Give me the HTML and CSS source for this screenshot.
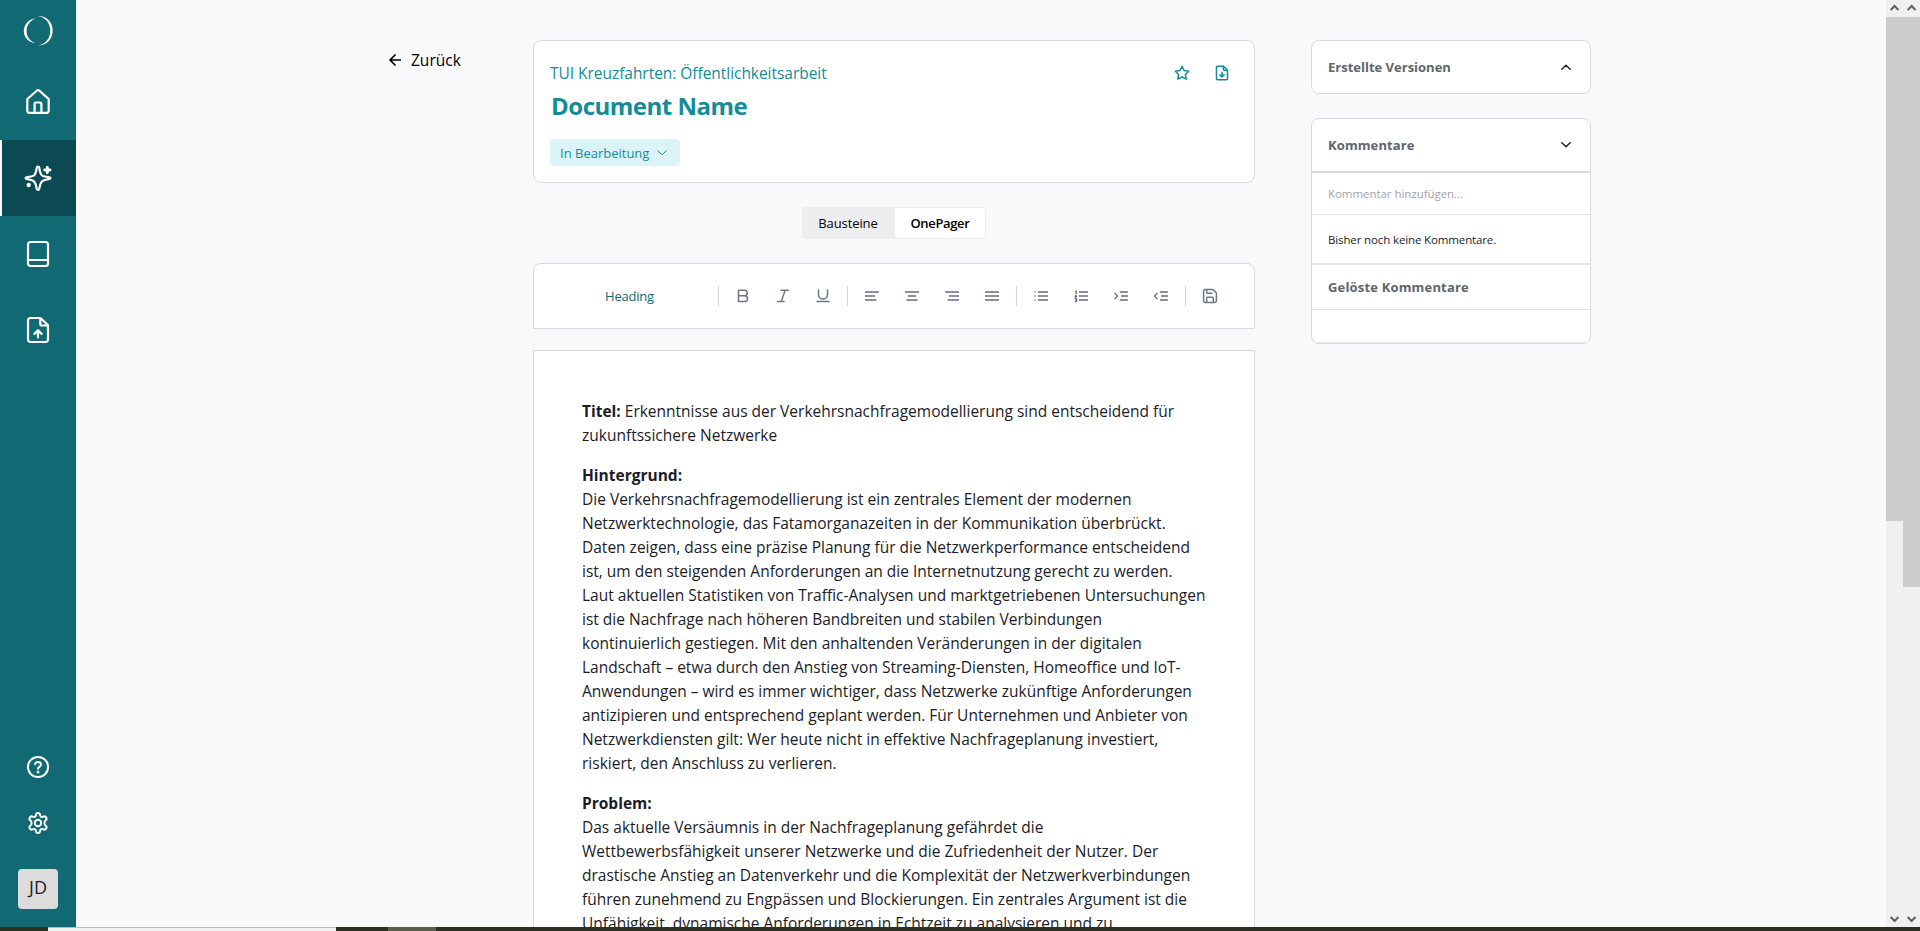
FILE: index.html
```
<!DOCTYPE html>
<html lang="de">
<head>
<meta charset="utf-8">
<title>Document Name</title>
<link rel="stylesheet" href="styles.css">
</head>
<body>
<div class="app">
  <nav class="sidebar">
    <a class="logo"><svg width="32" height="32" viewBox="0 0 32 32" fill="#fff"><path d="M14.200 3.200C7 3.600 1.800 9.500 1.800 16.200c0 6.600 5.200 11.600 12.200 11.900C8.400 26.500 4.600 22 4.600 16.200 4.600 9.800 8.600 4.900 14.200 3.200z"/><path d="M15.300 1.100c8.600-.6 15.400 5.500 15.400 14.400 0 8.700-6.300 15.100-14.400 14.900 7-1 12-7 12-14.600C28.300 8 23 1.800 15.300 1.100z"/></svg></a>
    <a class="nav-item"><svg width="28" height="28" viewBox="0 0 28 28"><path d="M3.300 11 12.700 2.700a2 2 0 0 1 2.600 0L24.700 11V23a1.800 1.800 0 0 1-1.800 1.800H5.100A1.800 1.800 0 0 1 3.300 23z"/><path d="M10.600 24.500V15.800a1.300 1.300 0 0 1 1.300-1.300h4.200a1.300 1.300 0 0 1 1.300 1.300v8.700"/></svg></a>
    <a class="nav-item active"><svg width="28" height="28" viewBox="0 0 28 28"><path d="M14 2.500c-1 0-1.200.8-1.300 1.500-.7 5-1.500 6.700-3 7.600C8 12.500 6.300 12.700 3.500 13c-1.300.2-2 .4-2 1s.7.900 2 1.100c3 .5 4.800.9 6.200 2 1.500 1.200 2.200 2.900 3 7.400.2.900.4 1.500 1.300 1.500s1.100-.6 1.300-1.500c.8-4.500 1.500-6.200 3-7.400 1.400-1.100 3.200-1.500 6.200-2 1.300-.2 2-.5 2-1.100s-.7-.8-2-1c-2.800-.3-4.500-.5-6.200-1.400-1.500-.9-2.300-2.600-3-7.600-.1-.7-.3-1.500-1.300-1.500z"/><path d="M23.300 3.300v5.400M20.600 6H26" stroke-width="2.800"/><circle cx="4.700" cy="21" r="2.200" class="solid"/></svg></a>
    <a class="nav-item"><svg width="28" height="28" viewBox="0 0 28 28"><rect x="4" y="2" width="20" height="24" rx="2.500"/><path d="M4 20h20"/></svg></a>
    <a class="nav-item"><svg width="28" height="28" viewBox="0 0 28 28"><path d="M16.500 2H6.500A2.500 2.500 0 0 0 4 4.500v19A2.500 2.500 0 0 0 6.500 26h15a2.500 2.500 0 0 0 2.500-2.500V9.300z"/><path d="M16.300 2.500V8a1.500 1.500 0 0 0 1.500 1.500h5.700M14 21.500v-7m-3.600 3.400L14 14.300l3.600 3.600"/></svg></a>
    <div class="nav-bottom">
      <a class="small-item"><svg width="24" height="24" viewBox="0 0 24 24"><circle cx="12" cy="12" r="10.100"/><path d="M9.100 9.300c.3-1.500 1.500-2.300 2.900-2.300 1.700 0 3 1.100 3 2.600 0 2.200-3 2.300-3 4.200" /><circle cx="12" cy="17" r=".5"/></svg></a>
      <a class="small-item"><svg width="24" height="24" viewBox="0 0 24 24"><path d="M12 2c-1.500 0-2 .9-2.100 2-.1 1.700-1.600 2.500-3.100 1.700-1-.5-2.200-.6-3 .8s-.2 2.400.7 3c1.400 1 1.400 4 0 5-.9.600-1.500 1.600-.7 3s2 1.300 3 .8c1.500-.8 3 0 3.100 1.700.1 1.100.6 2 2.100 2s2-.9 2.100-2c.1-1.700 1.600-2.500 3.100-1.700 1 .5 2.200.6 3-.8s.2-2.400-.7-3c-1.400-1-1.400-4 0-5 .9-.6 1.500-1.600.7-3s-2-1.300-3-.8c-1.500.8-3 0-3.100-1.700C14 2.900 13.500 2 12 2z"/><circle cx="12" cy="12" r="3.200"/></svg></a>
      <div class="avatar">JD</div>
    </div>
  </nav>

  <main class="content">
    <a class="back"><svg width="12" height="12" viewBox="0 0 12 12"><path d="M11.500 6H1M6 1 1 6l5 5"/></svg><span>Zurück</span></a>

    <div class="center">
      <section class="doc-card">
        <div class="doc-top">
          <span class="project">TUI Kreuzfahrten: Öffentlichkeitsarbeit</span>
          <span class="doc-actions">
            <svg width="16" height="16" viewBox="0 0 16 16"><path d="m8 1.300 2.100 4.200 4.600.7-3.300 3.300.8 4.700L8 12l-4.200 2.200.8-4.700L1.300 6.200l4.600-.7z"/></svg>
            <svg width="16" height="16" viewBox="0 0 16 16"><path d="M9.500 1.200h-6a1 1 0 0 0-1 1v11.600a1 1 0 0 0 1 1h9a1 1 0 0 0 1-1V5.200z"/><path d="M9.300 1.300v3a1 1 0 0 0 1 1h3.100M8 7.300v4.500M5.900 9.800 8 11.900l2.100-2.100"/></svg>
          </span>
        </div>
        <h1>Document Name</h1>
        <span class="status"><span>In Bearbeitung</span><svg width="10" height="6" viewBox="0 0 10 6"><path d="m.7.800 4.300 4 4.300-4"/></svg></span>
      </section>

      <div class="toggle"><span class="tab">Bausteine</span><span class="tab selected">OnePager</span></div>

      <div class="toolbar">
        <span class="style-name">Heading</span>
        <i class="sep"></i>
        <div class="tools">
          <svg width="16" height="16" viewBox="0 0 16 16"><path d="M3.500 2.300h6a2.700 2.700 0 0 1 0 5.500h-6zM3.500 7.800h6.600a2.900 2.900 0 0 1 0 5.700H3.500z"/></svg>
          <svg width="16" height="16" viewBox="0 0 16 16"><path d="M6 2.300h7.500M2.500 13.500H9M10.200 2.300l-4 11.200"/></svg>
          <svg width="16" height="16" viewBox="0 0 16 16"><path d="M3.500 2v4.500a4.500 4.500 0 0 0 9 0V2M2 13.600h12"/></svg>
        </div>
        <i class="sep"></i>
        <div class="tools bars">
          <svg width="16" height="16" viewBox="0 0 16 16"><path d="M1 4h14M1 8h10M1 12h11.500"/></svg>
          <svg width="16" height="16" viewBox="0 0 16 16"><path d="M1 4h14M4 8h8M2.500 12h11"/></svg>
          <svg width="16" height="16" viewBox="0 0 16 16"><path d="M1 4h14M5 8h10M3.500 12H15"/></svg>
          <svg width="16" height="16" viewBox="0 0 16 16"><path d="M1 4h14M1 8h14M1 12h14"/></svg>
        </div>
        <i class="sep"></i>
        <div class="tools bars">
          <svg width="16" height="16" viewBox="0 0 16 16"><path d="M5 4h10M5 8h10M5 12h10"/><path class="dots" d="M1 4h2M1 8h2M1 12h2"/></svg>
          <svg width="16" height="16" viewBox="0 0 16 16"><path d="M6 4h9M6 8h9M6 12h9"/><path class="fine" d="M2 3.500l1.200-.4v3M1.800 8h1.800L2 10M1.800 11h1.800v2.500H1.800"/></svg>
          <svg width="16" height="16" viewBox="0 0 16 16"><path d="M7 4h8M8 8h7M7 12h8"/><path class="fine" d="m1.500 5 3 3-3 3"/></svg>
          <svg width="16" height="16" viewBox="0 0 16 16"><path d="M7 4h8M8 8h7M7 12h8"/><path class="fine" d="m4.500 5-3 3 3 3"/></svg>
        </div>
        <i class="sep"></i>
        <div class="tools">
          <svg width="16" height="16" viewBox="0 0 16 16"><path d="M3 1.600h8L14.400 5v8a1.400 1.400 0 0 1-1.400 1.400H3A1.400 1.400 0 0 1 1.600 13V3A1.400 1.400 0 0 1 3 1.600z"/><path d="M4.700 14.200V10a.8.800 0 0 1 .8-.8h5a.8.800 0 0 1 .8.800v4.200M4.700 1.800V4.500a.8.800 0 0 0 .8.800H10"/></svg>
        </div>
      </div>

      <article class="page">
        <p><b>Titel:</b> Erkenntnisse aus der Verkehrsnachfragemodellierung sind entscheidend für<br>zukunftssichere Netzwerke</p>
        <p><b>Hintergrund:</b><br>Die Verkehrsnachfragemodellierung ist ein zentrales Element der modernen<br>Netzwerktechnologie, das Fatamorganazeiten in der Kommunikation überbrückt.<br>Daten zeigen, dass eine präzise Planung für die Netzwerkperformance entscheidend<br>ist, um den steigenden Anforderungen an die Internetnutzung gerecht zu werden.<br>Laut aktuellen Statistiken von Traffic-Analysen und marktgetriebenen Untersuchungen<br>ist die Nachfrage nach höheren Bandbreiten und stabilen Verbindungen<br>kontinuierlich gestiegen. Mit den anhaltenden Veränderungen in der digitalen<br>Landschaft – etwa durch den Anstieg von Streaming-Diensten, Homeoffice und IoT-<br>Anwendungen – wird es immer wichtiger, dass Netzwerke zukünftige Anforderungen<br>antizipieren und entsprechend geplant werden. Für Unternehmen und Anbieter von<br>Netzwerkdiensten gilt: Wer heute nicht in effektive Nachfrageplanung investiert,<br>riskiert, den Anschluss zu verlieren.</p>
        <p><b>Problem:</b><br>Das aktuelle Versäumnis in der Nachfrageplanung gefährdet die<br>Wettbewerbsfähigkeit unserer Netzwerke und die Zufriedenheit der Nutzer. Der<br>drastische Anstieg an Datenverkehr und die Komplexität der Netzwerkverbindungen<br>führen zunehmend zu Engpässen und Blockierungen. Ein zentrales Argument ist die<br>Unfähigkeit, dynamische Anforderungen in Echtzeit zu analysieren und zu</p>
      </article>
    </div>

    <aside class="panels">
      <section class="panel versions"><h2>Erstellte Versionen<svg width="12" height="8" viewBox="0 0 12 8"><path d="M1.800 6.200 6 2.200l4.200 4"/></svg></h2></section>
      <section class="panel comments">
        <h2>Kommentare<svg width="12" height="8" viewBox="0 0 12 8"><path d="M1.800 1.800 6 5.800l4.200-4"/></svg></h2>
        <div class="comment-input">Kommentar hinzufügen...</div>
        <div class="comment-empty">Bisher noch keine Kommentare.</div>
        <h3>Gelöste Kommentare</h3>
        <div class="resolved"></div>
      </section>
    </aside>
  </main>

  <div class="scrollbar inner"><svg width="17" height="17" viewBox="0 0 17 17"><path d="m4.700 10 3.900-4 3.900 4"/></svg><i class="thumb"></i><svg class="down" width="17" height="17" viewBox="0 0 17 17"><path d="m4.700 7 3.900 4 3.900-4"/></svg></div>
  <div class="scrollbar outer"><svg width="17" height="17" viewBox="0 0 17 17"><path d="m4.700 10 3.900-4 3.900 4"/></svg><i class="thumb"></i><svg class="down" width="17" height="17" viewBox="0 0 17 17"><path d="m4.700 7 3.900 4 3.900-4"/></svg></div>
</div>
<footer class="taskbar"><i class="search"></i><i class="task"></i></footer>
</body>
</html>
```
FILE: styles.css
```
* { box-sizing: border-box; }
body {
  margin: 0;
  height: 931px;
  overflow: hidden;
  background: #f9f9fb;
  font-family: "Open Sans", "Noto Sans", sans-serif;
  font-size: 15.500px;
  color: #1c1c27;
}
svg { display: block; flex: none; fill: none; stroke: currentColor; stroke-linecap: round; stroke-linejoin: round; }
.app { display: flex; height: 927px; overflow: hidden; }

.sidebar { width: 76px; flex: none; display: flex; flex-direction: column; background: #116a73; color: #fff; }
.logo { height: 64px; display: flex; justify-content: center; padding-top: 15px; }
.logo svg { stroke: none; fill: #fff; }
.nav-item { height: 76px; display: flex; align-items: center; justify-content: center; }
.nav-item svg { stroke-width: 2.200; }
.nav-item .solid { fill: #fff; stroke: none; }
.nav-item.active { background: #0b4a52; border-left: 2px solid #fff; padding-right: 2px; }
.nav-bottom { margin-top: auto; display: flex; flex-direction: column; align-items: center; padding-bottom: 18px; }
.small-item { height: 56px; display: flex; align-items: center; }
.small-item svg { stroke-width: 2; }
.avatar { width: 40px; height: 40px; margin-top: 18px; border-radius: 4px; background: #dcdcdc; color: #1c1c27; font-size: 18px; line-height: 37px; text-align: center; }

.content { flex: 1; display: flex; align-items: flex-start; padding: 40px 0 0 313px; }
.back { width: 144px; flex: none; display: flex; align-items: center; gap: 10px; height: 40px; color: #000; }
.back svg { stroke-width: 1.700; }
.center { width: 722px; flex: none; }
.doc-card { height: 143px; border: 1px solid #d9d9e0; border-radius: 8px; background: #fff; padding: 20px 24px 0 16px; color: #128c98; }
.doc-top { display: flex; justify-content: space-between; height: 25px; line-height: 24px; }
.project { letter-spacing: -.04px; }
.doc-actions { display: flex; gap: 24px; padding-top: 4px; }
.doc-actions svg { stroke-width: 1.500; }
h1 { margin: 4px 0 0 1px; font-size: 24px; line-height: 32px; font-weight: 700; letter-spacing: -.5px; }
.status { display: inline-flex; align-items: center; gap: 8px; width: 130px; height: 27px; margin-top: 17px; padding-left: 10px; border-radius: 4px; background: #dcf4f8; font-size: 13px; }
.toggle { display: flex; width: 184px; height: 32px; margin: 24px auto; padding: 1px; border-radius: 4px; background: #eeeef0; color: #000; font-size: 13px; line-height: 30px; letter-spacing: -.1px; }
.tab { width: 92px; padding-right: 2px; text-align: center; }
.tab.selected { width: 90px; padding: 0; background: #fff; border-radius: 3px; font-weight: 600; letter-spacing: -.35px; }
.toolbar { height: 66px; display: flex; align-items: center; border: 1px solid #d9d9e0; border-radius: 8px 8px 0 0; background: #fff; color: #71758a; padding-left: 71px; }
.style-name { width: 113px; margin-right: -16px; color: #116a73; font-size: 13px; letter-spacing: -.2px; }
.sep { width: 1px; height: 20px; margin: 0 16px; background: #d3d3da; }
.tools { display: flex; gap: 24px; }
.tools svg { stroke-width: 1.500; }
.bars svg { stroke-width: 2; stroke-linecap: butt; color: #8d8fa3; }
.bars .dots { stroke: #c3c4ce; }
.bars .fine { stroke: #656a7c; stroke-width: 1.300; }
.page { height: 700px; margin-top: 21px; border: 1px solid #d9d9e0; background: #fff; padding: 48px 0 0 48px; line-height: 24px; white-space: nowrap; }
.page p { margin: 0 0 16px; }

.panels { width: 280px; margin-left: 56px; flex: none; }
.panel { border: 1px solid #d9d9e0; border-radius: 8px; background: #fff; overflow: hidden; }
.versions { height: 54px; margin-bottom: 24px; }
.comments { height: 226px; }
.panel h2, .panel h3 { margin: 0; font-size: 13px; font-weight: 700; color: #60646c; padding: 0 18px 0 16px; }
.panel h2 { display: flex; align-items: center; justify-content: space-between; height: 52px; }
.panel h2 svg { color: #1c2024; stroke-width: 1.500; }
.comments h2 { height: 54px; border-bottom: 2px solid #d9d9e0; letter-spacing: .1px; }
.comment-input, .comment-empty { padding-left: 16px; font-size: 11.500px; }
.comment-input { height: 42px; line-height: 41px; border-bottom: 1px solid #e0e1e6; color: #a0a3ad; letter-spacing: -.05px; }
.comment-empty { height: 50px; line-height: 50px; border-bottom: 2px solid #e4e4ec; letter-spacing: -.13px; }
.panel h3 { height: 45px; line-height: 44px; border-bottom: 1px solid #e0e1e6; letter-spacing: .17px; }
.resolved { height: 33px; border-bottom: 1px solid #e4e4ec; }

.scrollbar { width: 17px; flex: none; display: flex; flex-direction: column; background: #f0f0f0; color: #606060; }
.scrollbar svg { stroke-width: 2; stroke-linecap: butt; stroke-linejoin: miter; }
.thumb { background: #cdcdcd; }
.inner .thumb { height: 504px; }
.outer .thumb { height: 570px; }
.scrollbar .down { margin-top: auto; }

.taskbar { height: 4px; display: flex; background: #2e3023; padding-left: 48px; }
.search { width: 288px; background: #f2f2f2; border-top: 1px solid #b8b8b4; }
.task { width: 48px; margin-left: 52px; background: #5a5e4e; }
```
